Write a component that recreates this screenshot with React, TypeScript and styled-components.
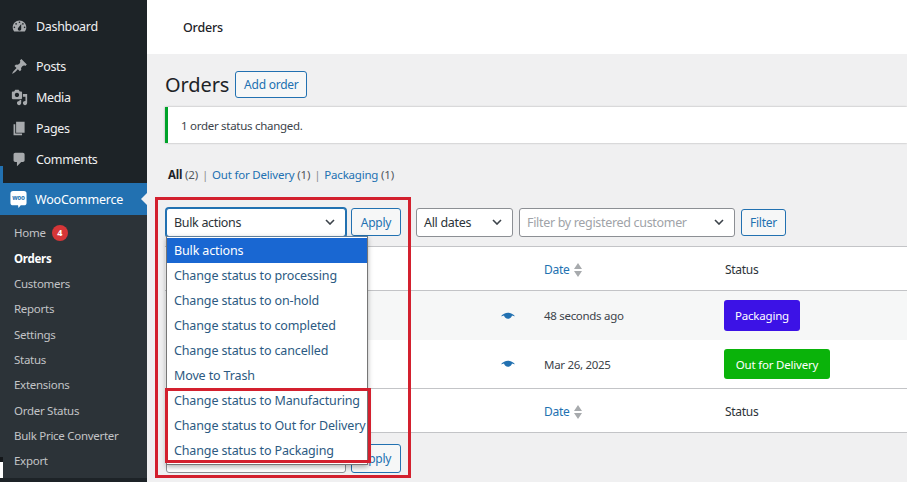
import styled, { createGlobalStyle } from "styled-components";

const GlobalStyle = createGlobalStyle`
    html, body {
        margin: 0;
        height: 100%;
        overflow: hidden;
        background: #f0f0f1;
    }
    * {
        box-sizing: border-box;
    }
`;

const font = `"Noto Sans", "Open Sans", sans-serif`;

//page frame
const Page = styled.div`
    display: flex;
    width: 907px;
    height: 482px;
    overflow: hidden;
    font-family: ${font};
    font-size: 12.5px;
    color: #3c434a;
`;

//admin menu
const Side = styled.nav`
    width: 147px;
    height: 482px;
    flex-shrink: 0;
    background: #1d2327;
    padding-top: 11px;
    color: #f0f0f1;
`;
const TopItem = styled.div<{ $gap?: number }>`
    display: flex;
    align-items: center;
    height: 31px;
    margin-top: ${(p) => p.$gap ?? 0}px;
    padding-left: 11px;
    gap: 8px;
    font-size: 12.5px;
    letter-spacing: -0.33px;
    svg {
        width: 17px;
        height: 17px;
        fill: #a7aaad;
        flex-shrink: 0;
    }
`;
const WooItem = styled(TopItem)`
    position: relative;
    height: 32px;
    margin-left: 3px;
    padding-left: 7px;
    background: #2271b1;
    color: #ffffff;
    gap: 8px;
    letter-spacing: -0.2px;
    &::before {
        content: "";
        position: absolute;
        left: -3px;
        top: -17px;
        width: 3px;
        height: 49px;
        background: #2271b1;
    }
    &::after {
        content: "";
        position: absolute;
        right: 0;
        top: 10px;
        border: 6px solid transparent;
        border-right-color: #f0f0f1;
    }
`;
const SubMenu = styled.div`
    position: relative;
    height: 263px;
    padding: 5px 0 0 14px;
    background: #2c3338;
    &::after {
        content: "";
        position: absolute;
        left: 0;
        bottom: 0;
        width: 3px;
        height: 16px;
        background: #ffffff;
        border-top: 5px solid #14171a;
    }
`;
const SubItem = styled.div<{ $active?: boolean }>`
    display: flex;
    align-items: center;
    gap: 6px;
    height: 25.35px;
    font-size: 11.5px;
    letter-spacing: -0.28px;
    color: ${(p) => (p.$active ? "#ffffff" : "#c3c4c7")};
    font-weight: ${(p) => (p.$active ? 700 : 400)};
`;
const Badge = styled.span`
    display: inline-flex;
    align-items: center;
    justify-content: center;
    width: 16px;
    height: 16px;
    border-radius: 50%;
    background: #d63638;
    color: #ffffff;
    font-size: 9px;
    font-weight: 700;
`;

//main column
const Main = styled.main`
    position: relative;
    flex: 1;
    min-width: 0;
`;
const TopBar = styled.header`
    display: flex;
    align-items: center;
    height: 54px;
    padding-left: 36px;
    background: #ffffff;
    color: #1d2327;
    font-size: 12.5px;
    font-weight: 500;
    letter-spacing: -0.2px;
`;
const Content = styled.div`
    padding: 17px 0 0 18px;
`;
const Heading = styled.div`
    display: flex;
    align-items: center;
    gap: 6px;
    height: 27px;
`;
const Title = styled.h1`
    margin: 0;
    font-size: 20px;
    font-weight: 400;
    color: #1d2327;
    letter-spacing: -0.1px;
`;
const Button = styled.button<{ $w: number; $h?: number }>`
    width: ${(p) => p.$w}px;
    height: ${(p) => p.$h ?? 27}px;
    padding: 0;
    background: #f6f7f7;
    border: 1px solid #2271b1;
    border-radius: 3px;
    color: #2271b1;
    font-family: ${font};
    font-size: 12px;
    letter-spacing: -0.25px;
`;
const Notice = styled.div`
    display: flex;
    align-items: center;
    height: 36px;
    margin-top: 9px;
    padding-left: 13px;
    background: #ffffff;
    border-left: 3px solid #00a32a;
    box-shadow: 0 0 2px rgba(0, 0, 0, 0.3);
    font-size: 11.5px;
    letter-spacing: -0.28px;
`;
const Views = styled.div`
    display: flex;
    align-items: center;
    gap: 4px;
    height: 18px;
    margin: 22px 0 0 3px;
    font-size: 11.5px;
    letter-spacing: -0.2px;
    color: #50575e;
    b {
        color: #1d2327;
    }
    a {
        color: #2271b1;
    }
    i {
        font-style: normal;
        color: #8c8f94;
    }
`;
const Toolbar = styled.div`
    display: flex;
    align-items: center;
    height: 30px;
    margin: 24px 0 9px 1px;
`;
const SelectBox = styled.div<{ $w: number; $focus?: boolean; $muted?: boolean; $mr?: number; $ml?: number }>`
    display: flex;
    align-items: center;
    justify-content: space-between;
    width: ${(p) => p.$w}px;
    height: 29px;
    margin-left: ${(p) => p.$ml ?? 0}px;
    margin-right: ${(p) => p.$mr ?? 5}px;
    padding: 0 10px 0 7px;
    background: #ffffff;
    border: 1px solid ${(p) => (p.$focus ? "#2271b1" : "#8c8f94")};
    box-shadow: ${(p) => (p.$focus ? "0 0 0 1px #2271b1" : "none")};
    border-radius: 3px;
    font-size: 12.5px;
    letter-spacing: -0.32px;
    color: ${(p) => (p.$muted ? "#a0a3a8" : "#2c3338")};
    svg {
        width: 10px;
        height: 6px;
        stroke: #3c434a;
        stroke-width: 1.6;
        fill: none;
    }
`;

//orders table
const Table = styled.div`
    background: #ffffff;
    border-top: 1px solid #c3c4c7;
    border-bottom: 1px solid #c3c4c7;
`;
const Row = styled.div<{ $h: number; $alt?: boolean; $line?: boolean; $head?: boolean }>`
    display: grid;
    grid-template-columns: 336px 43px 180px 1fr;
    align-items: center;
    height: ${(p) => p.$h}px;
    padding-top: ${(p) => (p.$head ? 2 : 0)}px;
    background: ${(p) => (p.$alt ? "#f6f7f7" : "#ffffff")};
    border-bottom: ${(p) => (p.$line ? "1px solid #c3c4c7" : "none")};
    font-size: 11.5px;
    letter-spacing: -0.3px;
    svg.eye {
        width: 14px;
        height: 14px;
        fill: #2271b1;
    }
`;
const SortLink = styled.span`
    display: flex;
    align-items: center;
    gap: 5px;
    color: #2271b1;
    font-size: 12px;
    svg {
        width: 8px;
        height: 14px;
        fill: #a7aaad;
    }
`;
const ColName = styled.span`
    padding-left: 1px;
    color: #2c3338;
    font-size: 12px;
`;
const StatusTag = styled.span<{ $bg: string; $w: number; $h: number }>`
    display: inline-flex;
    justify-self: start;
    align-items: center;
    justify-content: center;
    width: ${(p) => p.$w}px;
    height: ${(p) => p.$h}px;
    border-radius: 3px;
    background: ${(p) => p.$bg};
    color: #ffffff;
    font-size: 11.5px;
    letter-spacing: -0.2px;
`;
const BottomBar = styled(Toolbar)`
    margin-top: 10px;
`;

//overlays
const Menu = styled.div`
    position: absolute;
    left: 19px;
    top: 236px;
    width: 202px;
    padding: 1px 0;
    background: #ffffff;
    border: 1px solid #767676;
    border-top-color: #5f7f9c;
    box-shadow: 0 2px 5px rgba(0, 0, 0, 0.3);
    z-index: 2;
`;
const MenuItem = styled.div<{ $on?: boolean }>`
    display: flex;
    align-items: center;
    height: 25px;
    padding-left: 7px;
    white-space: nowrap;
    font-size: 12.5px;
    letter-spacing: -0.13px;
    color: ${(p) => (p.$on ? "#ffffff" : "#2c5a82")};
    background: ${(p) => (p.$on ? "#1967d2" : "transparent")};
`;
const Mark = styled.div<{ $l: number; $t: number; $w: number; $h: number }>`
    position: absolute;
    left: ${(p) => p.$l}px;
    top: ${(p) => p.$t}px;
    width: ${(p) => p.$w}px;
    height: ${(p) => p.$h}px;
    border: 3px solid #d3202e;
    pointer-events: none;
    z-index: 3;
`;

const Chevron = () => (
    <svg viewBox="0 0 10 6">
        <path d="M1 1l4 4 4-4" />
    </svg>
);

const Sort = () => (
    <svg viewBox="0 0 8 14">
        <path d="M4 0l4 6H0zM4 14L0 8h8z" />
    </svg>
);

const Eye = () => (
    <svg className="eye" viewBox="0 0 20 20">
        <path d="M10 5.500c-3.800 0-7.500 1.800-10 4.800 1.200.1 2.800-.5 4.300-1 .5 2.700 2.800 4.700 5.700 4.700s5.200-2 5.700-4.700c1.500.5 3.100 1.100 4.300 1-2.500-3-6.200-4.800-10-4.800z" />
    </svg>
);

const WooLogo = () => (
    <svg width="18" height="19" viewBox="0 0 18 19">
        <path
            fill="#fff"
            d="M3 0h12a3 3 0 0 1 3 3v10a3 3 0 0 1-3 3h-3.500L9 19l-.5-3H3a3 3 0 0 1-3-3V3a3 3 0 0 1 3-3z"
        />
        <text x="9" y="10.500" textAnchor="middle" fontSize="7" fontWeight="700" fill="#2271b1" fontFamily="Noto Sans">
            woo
        </text>
    </svg>
);

const icons = {
    dashboard:
        "M3.76 16h12.48c1.1-1.37 1.76-3.11 1.76-5 0-4.42-3.58-8-8-8s-8 3.58-8 8c0 1.89.66 3.63 1.76 5zM10 4c.55 0 1 .45 1 1s-.45 1-1 1-1-.45-1-1 .45-1 1-1zM6 6c.55 0 1 .45 1 1s-.45 1-1 1-1-.45-1-1 .45-1 1-1zm8 0c.55 0 1 .45 1 1s-.45 1-1 1-1-.45-1-1 .45-1 1-1zm-5.370 5.550L12 7v6c0 1.100-.9 2-2 2s-2-.9-2-2c0-.57.24-1.080.63-1.450zM4 10c.55 0 1 .45 1 1s-.45 1-1 1-1-.45-1-1 .45-1 1-1zm12 0c.55 0 1 .45 1 1s-.45 1-1 1-1-.45-1-1 .45-1 1-1z",
    posts:
        "M10.440 3.020l1.820-1.820 6.360 6.350-1.830 1.820c-1.050-.68-2.480-.57-3.410.36l-.75.75c-.92.93-1.040 2.350-.35 3.410l-1.830 1.820-2.410-2.410-2.800 2.790c-.42.42-3.380 2.710-3.800 2.290s1.860-3.390 2.280-3.810l2.790-2.790L4.100 9.360l1.830-1.820c1.050.69 2.480.57 3.400-.36l.75-.75c.93-.92 1.050-2.350.36-3.410z",
    media:
        "M13 11V4c0-.55-.45-1-1-1h-1.670L9 1H5L3.670 3H2c-.55 0-1 .45-1 1v7c0 .55.45 1 1 1h10c.55 0 1-.45 1-1zM7 4.500c1.380 0 2.500 1.120 2.500 2.500S8.380 9.500 7 9.500 4.500 8.380 4.500 7 5.620 4.500 7 4.500zM14 6h5v10.500c0 1.380-1.120 2.500-2.500 2.500S14 17.880 14 16.500s1.120-2.500 2.500-2.500c.17 0 .34.020.5.050V9h-3V6zm-4 8.050V13h2v3.500c0 1.380-1.120 2.500-2.500 2.500S7 17.880 7 16.500 8.120 14 9.500 14c.17 0 .34.020.5.050z",
    pages: "M6 15V2h10v13H6zm-1 1h8v2H3V5h2v11z",
    comments:
        "M5 2h9c1.100 0 2 .9 2 2v7c0 1.100-.9 2-2 2h-2l-5 5v-5H5c-1.100 0-2-.9-2-2V4c0-1.100.9-2 2-2z",
};

const MenuIcon = ({ d }: { d: string }) => (
    <svg viewBox="0 0 20 20">
        <path d={d} />
    </svg>
);

const subItems = [
    "Customers",
    "Reports",
    "Settings",
    "Status",
    "Extensions",
    "Order Status",
    "Bulk Price Converter",
    "Export",
];

const bulkOptions = [
    "Change status to processing",
    "Change status to on-hold",
    "Change status to completed",
    "Change status to cancelled",
    "Move to Trash",
    "Change status to Manufacturing",
    "Change status to Out for Delivery",
    "Change status to Packaging",
];

const App = () => {
    return (
        <Page>
            <GlobalStyle />
            <Side>
                <TopItem>
                    <MenuIcon d={icons.dashboard} />
                    Dashboard
                </TopItem>
                <TopItem $gap={9}>
                    <MenuIcon d={icons.posts} />
                    Posts
                </TopItem>
                <TopItem>
                    <MenuIcon d={icons.media} />
                    Media
                </TopItem>
                <TopItem>
                    <MenuIcon d={icons.pages} />
                    Pages
                </TopItem>
                <TopItem>
                    <MenuIcon d={icons.comments} />
                    Comments
                </TopItem>
                <WooItem $gap={8}>
                    <WooLogo />
                    WooCommerce
                </WooItem>
                <SubMenu>
                    <SubItem>
                        Home <Badge>4</Badge>
                    </SubItem>
                    <SubItem $active>Orders</SubItem>
                    {subItems.map((item) => (
                        <SubItem key={item}>{item}</SubItem>
                    ))}
                </SubMenu>
            </Side>
            <Main>
                <TopBar>Orders</TopBar>
                <Content>
                    <Heading>
                        <Title>Orders</Title>
                        <Button $w={72}>Add order</Button>
                    </Heading>
                    <Notice>1 order status changed.</Notice>
                    <Views>
                        <span>
                            <b>All</b> (2)
                        </span>
                        <i>|</i>
                        <span>
                            <a>Out for Delivery</a> (1)
                        </span>
                        <i>|</i>
                        <span>
                            <a>Packaging</a> (1)
                        </span>
                    </Views>
                    <Toolbar>
                        <SelectBox $w={180} $focus>
                            Bulk actions
                            <Chevron />
                        </SelectBox>
                        <Button $w={50} $h={28}>
                            Apply
                        </Button>
                        <SelectBox $w={97} $ml={15} $mr={6}>
                            All dates
                            <Chevron />
                        </SelectBox>
                        <SelectBox $w={216} $muted $mr={6}>
                            Filter by registered customer
                            <Chevron />
                        </SelectBox>
                        <Button $w={45} $h={27}>
                            Filter
                        </Button>
                    </Toolbar>
                    <Table>
                        <Row $h={44} $line $head>
                            <span />
                            <span />
                            <SortLink>
                                Date <Sort />
                            </SortLink>
                            <ColName>Status</ColName>
                        </Row>
                        <Row $h={49} $alt>
                            <span />
                            <Eye />
                            <span>48 seconds ago</span>
                            <StatusTag $bg="#3c12e6" $w={76} $h={31}>
                                Packaging
                            </StatusTag>
                        </Row>
                        <Row $h={49} $line>
                            <span />
                            <Eye />
                            <span>Mar 26, 2025</span>
                            <StatusTag $bg="#0ab30a" $w={106} $h={30}>
                                Out for Delivery
                            </StatusTag>
                        </Row>
                        <Row $h={43} $head>
                            <span />
                            <span />
                            <SortLink>
                                Date <Sort />
                            </SortLink>
                            <ColName>Status</ColName>
                        </Row>
                    </Table>
                    <BottomBar>
                        <SelectBox $w={180} />
                        <Button $w={50} $h={29}>
                            Apply
                        </Button>
                    </BottomBar>
                </Content>
                <Menu>
                    <MenuItem $on>Bulk actions</MenuItem>
                    {bulkOptions.map((item) => (
                        <MenuItem key={item}>{item}</MenuItem>
                    ))}
                </Menu>
                <Mark $l={8} $t={197} $w={256} $h={281} />
                <Mark $l={18} $t={388} $w={206} $h={75} />
            </Main>
        </Page>
    );
};

export default App;
